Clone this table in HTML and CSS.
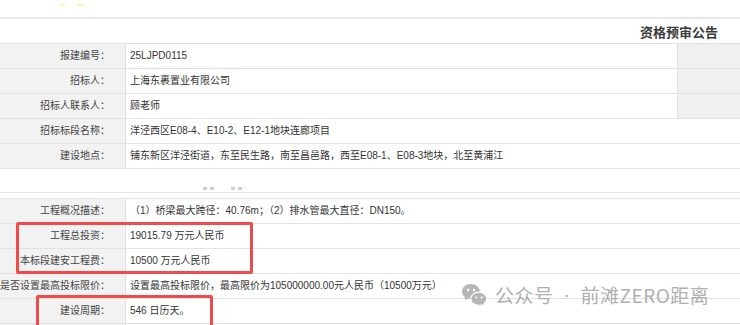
FILE: index.html
```html
<!DOCTYPE html>
<html lang="zh-CN">
<head>
<meta charset="utf-8">
<title>资格预审公告</title>
<link rel="stylesheet" href="styles.css">
</head>
<body>
<div class="page">
  <div class="topbar"><span class="ymark ym-1"></span><span class="ymark ym-2"></span></div>
  <div class="title-row"><h1 class="title">资格预审公告</h1></div>
  <div class="table">
    <div class="row has-side"><div class="label">报建编号：</div><div class="value">25LJPD0115</div><div class="side"></div></div>
    <div class="row has-side"><div class="label">招标人：</div><div class="value">上海东裹置业有限公司</div><div class="side"></div></div>
    <div class="row has-side"><div class="label">招标人联系人：</div><div class="value">顾老师</div><div class="side"></div></div>
    <div class="row"><div class="label">招标标段名称：</div><div class="value">洋泾西区E08-4、E10-2、E12-1地块连廊项目</div></div>
    <div class="row"><div class="label">建设地点：</div><div class="value">铺东新区洋泾街道，东至民生路，南至昌邑路，西至E08-1、E08-3地块，北至黄浦江</div></div>
  </div>
  <div class="spacer"><span class="dot"></span><span class="dot"></span><span class="dot dot-gap"></span><span class="dot"></span></div>
  <div class="table table-2">
    <div class="row"><div class="label">工程概况描述：</div><div class="value">（1）桥梁最大跨径：40.76m；（2）排水管最大直径：DN150。</div></div>
    <div class="row"><div class="label">工程总投资：</div><div class="value">19015.79 万元人民币</div></div>
    <div class="row"><div class="label">本标段建安工程费：</div><div class="value">10500 万元人民币</div></div>
    <div class="row"><div class="label">是否设置最高投标限价：</div><div class="value">设置最高投标限价，最高限价为105000000.00元人民币（10500万元）</div></div>
    <div class="row"><div class="label">建设周期：</div><div class="value">546 日历天。</div></div>
    <div class="row"><div class="label"></div><div class="value"></div></div>
  </div>

  <div class="hl hl-1"></div>
  <div class="hl hl-2"></div>

  <div class="watermark">
    <svg class="wx" width="27" height="24" viewBox="0 0 27 24" aria-hidden="true">
      <path d="M10 1C4.8 1 1 4.4 1 8.6c0 2.4 1.2 4.4 3.2 5.8L3.4 17l3-1.6c1.1.3 2.3.5 3.6.5 4.9 0 9-3.3 9-7.3S14.9 1 10 1z" fill="#a9a9a9"/>
      <circle cx="7" cy="7" r="1.3" fill="#fff"/>
      <circle cx="13" cy="7" r="1.3" fill="#fff"/>
      <path d="M18 9.2c-4.6 0-8.2 3-8.2 6.6s3.6 6.6 8.2 6.6c1 0 2-.2 2.9-.4l2.6 1.4-.7-2.3c1.8-1.2 3-3.1 3-5.3 0-3.6-3.6-6.6-7.8-6.6z" fill="#a9a9a9" stroke="#fff" stroke-width="1.2"/>
      <circle cx="15.3" cy="14.5" r="1.1" fill="#fff"/>
      <circle cx="20.7" cy="14.5" r="1.1" fill="#fff"/>
    </svg>
    <span class="wm-text">公众号</span><span class="wm-sep">·</span><span class="wm-text">前滩ZERO距离</span>
  </div>
</div>
</body>
</html>
```

FILE: styles.css
```css
* { box-sizing: border-box; }

body {
  margin: 0;
  background: #fff;
  color: #333;
  font-family: "Liberation Sans", "Noto Sans CJK SC", sans-serif;
  font-size: 10px;
}

.page {
  position: relative;
  width: 740px;
  height: 325px;
  overflow: hidden;
}

.topbar {
  height: 19px;
  border-bottom: 2px solid #e6e6e6;
  display: flex;
  align-items: flex-start;
  padding-top: 4px;
}

.ymark {
  display: block;
  height: 2px;
  background: #fbf7a8;
}
.ym-1 { width: 4px; margin-left: 61px; }
.ym-2 { width: 8px; margin-left: 12px; }

.title-row {
  height: 25px;
  border-bottom: 1px solid #e0e0e0;
  display: flex;
  justify-content: flex-end;
  align-items: center;
  padding-right: 22px;
}

.title {
  margin: 0;
  font-family: "Noto Sans CJK SC", sans-serif;
  font-size: 13px;
  font-weight: bold;
  color: #3a3a3a;
  line-height: 1;
}

.row {
  display: grid;
  grid-template-columns: 126px 1fr;
  height: 25px;
  border-bottom: 1px solid #e2e2e2;
}

.row.has-side {
  grid-template-columns: 126px 1fr 63px;
}

.label {
  background: #f2f2f2;
  border-right: 1px solid #e0e0e0;
  text-align: right;
  padding-right: 15px;
  line-height: 24px;
  white-space: nowrap;
  color: #444;
}

.value {
  padding-left: 4px;
  line-height: 24px;
  white-space: nowrap;
  color: #333;
}

.side {
  background: #f0f0f0;
  border-left: 1px solid #e0e0e0;
}

.spacer {
  height: 24px;
  border-bottom: 1px solid #e6e6e6;
  margin-bottom: 5px;
  display: flex;
  align-items: flex-end;
  padding-left: 203px;
  padding-bottom: 2px;
  gap: 3px;
}

.dot {
  display: block;
  width: 4px;
  height: 3px;
  background: #cfcfcf;
}
.dot-gap { margin-left: 14px; }

.table-2 {
  border-top: 1px solid #e2e2e2;
}

.hl {
  position: absolute;
  border: 3px solid #f04a4a;
  border-radius: 2px;
}
.hl-1 { left: 16px; top: 222px; width: 237px; height: 52px; }
.hl-2 { left: 36px; top: 295px; width: 177px; height: 40px; }

.watermark {
  position: absolute;
  left: 461px;
  top: 283px;
  display: flex;
  align-items: center;
  opacity: 0.85;
}

.wx { display: block; margin-right: 7px; }

.wm-text {
  font-family: "Noto Sans CJK SC", sans-serif;
  font-size: 19px;
  line-height: 24px;
  color: #a3a3a3;
  letter-spacing: 0.5px;
}

.wm-sep {
  display: block;
  width: 27px;
  text-align: center;
  font-size: 19px;
  line-height: 24px;
  color: #a3a3a3;
  font-family: "Liberation Sans", sans-serif;
}
```
